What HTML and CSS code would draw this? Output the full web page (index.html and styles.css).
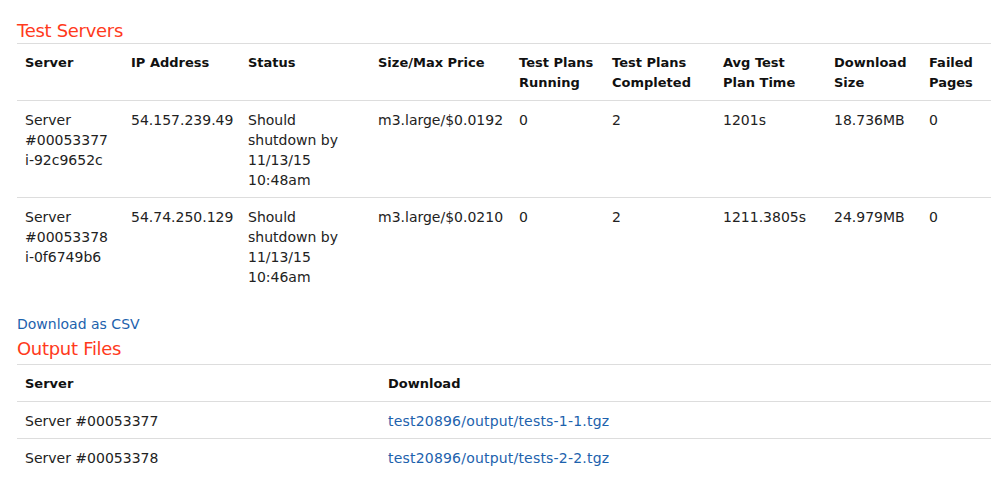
FILE: index.html
```html
<!DOCTYPE html>
<html>
<head>
<meta charset="utf-8">
<link rel="stylesheet" href="styles.css">
</head>
<body>
<div class="page">
  <h2 class="title">Test Servers</h2>
  <table class="grid servers">
    <colgroup>
      <col class="c1"><col class="c2"><col class="c3"><col class="c4"><col class="c5"><col class="c6"><col class="c7"><col class="c8"><col class="c9">
    </colgroup>
    <thead>
      <tr>
        <th>Server</th><th>IP Address</th><th>Status</th><th>Size/Max Price</th><th>Test Plans Running</th><th>Test Plans Completed</th><th>Avg Test Plan Time</th><th>Download Size</th><th>Failed Pages</th>
      </tr>
    </thead>
    <tbody>
      <tr>
        <td>Server #00053377 <span class="nw">i-92c9652c</span></td><td>54.157.239.49</td><td>Should shutdown by 11/13/15 10:48am</td><td>m3.large/$0.0192</td><td>0</td><td>2</td><td>1201s</td><td>18.736MB</td><td>0</td>
      </tr>
      <tr>
        <td>Server #00053378 <span class="nw">i-0f6749b6</span></td><td>54.74.250.129</td><td>Should shutdown by 11/13/15 10:46am</td><td>m3.large/$0.0210</td><td>0</td><td>2</td><td>1211.3805s</td><td>24.979MB</td><td>0</td>
      </tr>
    </tbody>
  </table>
  <a class="csv" href="#">Download as CSV</a>
  <h2 class="title second">Output Files</h2>
  <table class="grid files">
    <colgroup><col class="f1"><col class="f2"></colgroup>
    <thead>
      <tr><th>Server</th><th>Download</th></tr>
    </thead>
    <tbody>
      <tr><td>Server #00053377</td><td><a class="file" href="#">test20896/output/tests-1-1.tgz</a></td></tr>
      <tr><td>Server #00053378</td><td><a class="file" href="#">test20896/output/tests-2-2.tgz</a></td></tr>
    </tbody>
  </table>
</div>
</body>
</html>
```
FILE: styles.css
```css
html, body { margin: 0; padding: 0; background: #fff; }
body {
  font-family: "DejaVu Sans", Verdana, sans-serif;
  font-size: 14px;
  line-height: 20px;
  color: #222;
}
.page { padding: 19px 14px 0 17px; }
.title {
  margin: 0;
  font-family: "DejaVu Sans", sans-serif;
  font-weight: normal;
  font-size: 18px;
  line-height: 24px;
  color: #ff3a1c;
  letter-spacing: -0.3px;
}
.title.second { margin-top: 3px; margin-bottom: 3px; }
.grid {
  width: 974px;
  border-collapse: collapse;
  table-layout: fixed;
}
.grid th, .grid td {
  text-align: left;
  vertical-align: top;
  padding: 9px 8px 7px 8px;
  border-top: 1px solid #dddddd;
}
.grid th { font-weight: bold; font-size: 13px; color: #111; }
.nw { white-space: nowrap; }
.c1 { width: 106px; } .c2 { width: 117px; } .c3 { width: 130px; } .c4 { width: 141px; }
.c5 { width: 93px; } .c6 { width: 111px; } .c7 { width: 111px; } .c8 { width: 95px; } .c9 { width: 70px; }
.f1 { width: 363px; }
a { color: #1d62ad; text-decoration: none; }
.file { letter-spacing: 0.2px; }
.csv { display: block; line-height: 20px; margin-top: 20px; }
```
